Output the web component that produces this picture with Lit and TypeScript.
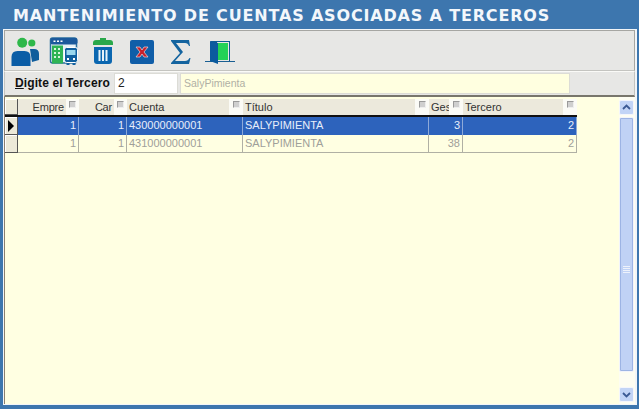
import { LitElement, html, css, svg } from "lit";
import { customElement } from "lit/decorators.js";

const COLS = [
  { label: "Empre", w: 61, right: true, box: 13 },
  { label: "Car", w: 48, right: true, box: 13 },
  { label: "Cuenta", w: 116, right: false, box: 14 },
  { label: "Título", w: 186, right: false, box: 14 },
  { label: "Ges", w: 34, right: false, box: 14 },
  { label: "Tercero", w: 114, right: false, box: 14 },
];
const ROWS = [
  ["1", "1", "430000000001", "SALYPIMIENTA", "3", "2"],
  ["1", "1", "431000000001", "SALYPIMIENTA", "38", "2"],
];

const icons = [
  svg`<svg width="30" height="30" viewBox="0 0 30 30"><circle cx="21.800" cy="6" r="3.600" fill="#2eb84a"/><path d="M20 12h4q5 0 5 5v6l-7 2z" fill="#0f5d9c"/><circle cx="12.200" cy="5.700" r="5" fill="#2eb84a"/><path d="M1.500 29V20q0-6 6-6h7q6 0 6 6v9z" fill="#0b5da6"/></svg>`,
  svg`<svg width="30" height="30" viewBox="0 0 30 30"><rect x="1.500" y="1" width="26" height="25" rx="2" fill="#e8f2f6" stroke="#2a6f9e" stroke-width="1.500"/><rect x="1.500" y="1" width="27" height="6.500" rx="2" fill="#1c5a9c"/><path d="M4.500 3.500h2V5h-2zM8 3.500h2V5H8zM11.500 3.500h2V5h-2z" fill="#fff"/><rect x="3" y="8.500" width="11" height="18" fill="#2fb455"/><path d="M5 11h2v2H5zM9 11h2v2H9zM5 15h2v2H5zM9 15h2v2H9zM5 19h2v2H5zM9 19h2v2H9z" fill="#d7f3dc"/><rect x="15.500" y="10.500" width="13" height="15" rx="2" fill="#11609f" stroke="#fff"/><rect x="17.500" y="13" width="9" height="5" fill="#9bd8ee"/><path d="M18 21h2v2h-2zM24 21h2v2h-2z" fill="#fff"/><path d="M17.500 26h3v2h-3zM23.500 26h3v2h-3z" fill="#11609f"/></svg>`,
  svg`<svg width="24" height="30" viewBox="0 0 24 30"><path d="M9 1h6v2H9z" fill="#2aa84a"/><path d="M2 6q0-3 3-3h14q3 0 3 3v2H2z" fill="#2aa84a"/><path d="M3 10h18v14q0 3-3 3H6q-3 0-3-3z" fill="#0b67b0"/><path d="M7.500 13h2v11h-2zM11 13h2v11h-2zM14.500 13h2v11h-2z" fill="#e8f3fa"/></svg>`,
  svg`<svg width="26" height="26" viewBox="0 0 26 26"><rect x="1" y="1" width="24" height="24" rx="2" fill="#105ea8"/><path d="M7 8h4l2 3 2-3h4l-4 5 4 5h-4l-2-3-2 3H7l4-5z" fill="#c8202c" stroke="#f0d8d8" stroke-width=".7"/></svg>`,
  svg`<svg width="22" height="26" viewBox="0 0 22 26"><path d="M1 1h18l1 6h-1q-1-3-4-3H6l7 9-8 9h10q3 0 4.500-3h1L19 25H1v-1l9-10L1 2z" fill="#14649f"/></svg>`,
  svg`<svg width="32" height="28" viewBox="0 0 32 28"><path d="M7 3h19v20h-1V4H13v20H7z" fill="#0e5c94"/><path d="M14 5h10v17H14z" fill="#23d257"/><path d="M6 3l8 2v21l-8-3z" fill="#0b5a9e"/><path d="M1 23.500h6M14 23.500h17" stroke="#1a5f92" stroke-width="1.200"/></svg>`,
];

@customElement("app-root")
export class AppRoot extends LitElement {
  static styles = css`
    :host {
      display: block;
      width: 639px;
      height: 409px;
      font-family: "Liberation Sans", Arial, sans-serif;
      overflow: hidden;
    }
    .frame {
      box-sizing: border-box;
      width: 639px;
      height: 409px;
      background: #3d76ae;
      padding: 0 2px 4px 3px;
      display: flex;
      flex-direction: column;
    }
    .title {
      height: 29px;
      flex: none;
      box-sizing: border-box;
      padding: 6px 0 0 10px;
      color: #f3f7fb;
      font: bold 16px/20px "DejaVu Sans", sans-serif;
      letter-spacing: 0.830px;
      white-space: nowrap;
    }
    .body {
      flex: 1;
      display: flex;
      flex-direction: column;
      background: #f2f5f8;
      min-height: 0;
      padding: 1px 2px 1px 1px;
    }
    .toolbar {
      height: 41px;
      flex: none;
      box-sizing: border-box;
      border: 1px solid #a6a6a2;
      border-bottom-color: #c4c4c0;
      background: #e7e7e5;
      display: flex;
      align-items: center;
      padding: 2px 0 0 0;
    }
    .tool {
      width: 39px;
      display: flex;
      justify-content: center;
      align-items: center;
    }
    .search {
      height: 26px;
      flex: none;
      box-sizing: border-box;
      display: flex;
      align-items: center;
      padding: 0 0 1px 10px;
      background: #e7e7e5;
      border: 1px solid #c4c4c0;
      border-top-color: #fafaf7;
      border-bottom: 2px solid #78766c;
    }
    .lbl {
      width: 99px;
      font-weight: bold;
      color: #111;
      white-space: nowrap;
      font-size: 12px;
      letter-spacing: 0.100px;
    }
    .lbl u { text-decoration: underline; }
    .in {
      box-sizing: border-box;
      height: 21px;
      line-height: 19px;
      padding: 0 3px;
      border: 1px solid #dcdcd6;
      font-size: 12px;
    }
    .code {
      width: 64px;
      background: #fff;
      color: #222;
      margin-right: 2px;
    }
    .name {
      width: 390px;
      background: #ffffe0;
      color: #b0b0a4;
      font-size: 10.500px;
    }
    .main {
      flex: 1;
      min-height: 0;
      display: flex;
      background: #ffffe2;
      border-left: 1px solid #8a7f70;
    }
    .grid {
      flex: 1;
      min-width: 0;
      font-size: 11px;
      color: #222;
      padding-top: 2px;
    }
    .row {
      display: flex;
      height: 18px;
      box-sizing: border-box;
      width: fit-content;
    }
    .ind {
      width: 13px;
      flex: none;
      box-sizing: border-box;
      background: #ece9d8;
      border: 1px solid #555;
      border-width: 0 1px 1px 0;
      box-shadow: inset 1px 1px 0 #fff;
      display: flex;
      align-items: center;
      justify-content: center;
    }
    .arrow {
      width: 0;
      height: 0;
      border-left: 6px solid #000;
      border-top: 6px solid transparent;
      border-bottom: 6px solid transparent;
    }
    .head {
      border-bottom: 2px solid #111;
    }
    .head .cell {
      background: #ece9dc;
      border: none;
      position: relative;
      color: #333;
      line-height: 17px;
    }
    .cell {
      box-sizing: border-box;
      flex: none;
      border-right: 1px solid #b0b0a4;
      border-bottom: 1px solid #b0b0a4;
      padding: 0 2px;
      line-height: 17px;
      white-space: nowrap;
      overflow: hidden;
    }
    .r { text-align: right; }
    .head .r { padding-right: 15px; letter-spacing: -0.200px; }
    .head .l { padding-left: 2px; }
    .box {
      position: absolute;
      right: 0;
      top: 0;
      height: 16px;
      background: #fbfbf6;
      display: flex;
      justify-content: center;
      padding-top: 2px;
      box-sizing: border-box;
    }
    .box i {
      width: 7px;
      height: 7px;
      background: #cfcfcf;
      border: 1px solid #9a9a9a;
      border-right-color: #eee;
      border-bottom-color: #eee;
      box-sizing: border-box;
    }
    .sel .cell {
      background: #2d63bc;
      color: #e8eefa;
      border-color: #8eaad8;
      border-bottom: none;
    }
    .plain .cell { color: #a0a09a; }
    .scroll {
      width: 16px;
      flex: none;
      display: flex;
      flex-direction: column;
      background: #fdfdf2;
      box-sizing: border-box;
      padding: 3px 0 2px 0;
    }
    .btn {
      height: 15px;
      flex: none;
      margin: 0 1px 0 0;
      box-sizing: border-box;
      border-radius: 2px;
      background: #c2d4f6;
      border: 1px solid #f4f6fc;
      display: flex;
      align-items: center;
      justify-content: center;
    }
    .thumb {
      flex: 1;
      margin: 2px 1px 15px 0;
      background: #c0d2f5;
      border: 1px solid #f2f4fb;
      outline: 1px solid #9db4e4;
      outline-offset: -2px;
      display: flex;
      align-items: center;
      justify-content: center;
      border-radius: 2px;
    }
    .grip {
      margin-top: 50px;
      display: flex;
    }
  `;

  render() {
    return html`
      <div class="frame">
        <div class="title">MANTENIMIENTO DE CUENTAS ASOCIADAS A TERCEROS</div>
        <div class="body">
          <div class="toolbar">
            ${icons.map((i) => html`<div class="tool">${i}</div>`)}
          </div>
          <div class="search">
            <div class="lbl"><u>D</u>igite el Tercero</div>
            <div class="in code">2</div>
            <div class="in name">SalyPimienta</div>
          </div>
          <div class="main">
            <div class="grid">
              <div class="row head">
                <div class="ind"></div>
                ${COLS.map(
                  (c) => html`<div class="cell ${c.right ? "r" : "l"}" style="width:${c.w}px">
                    ${c.label}
                    <span class="box" style="width:${c.box}px"><i></i></span>
                  </div>`
                )}
              </div>
              ${ROWS.map(
                (r, i) => html`<div class="row ${i === 0 ? "sel" : "plain"}">
                  <div class="ind">${i === 0 ? html`<span class="arrow"></span>` : ""}</div>
                  ${r.map(
                    (v, j) => html`<div class="cell ${COLS[j].right || j >= 4 ? "r" : ""}" style="width:${COLS[j].w}px">${v}</div>`
                  )}
                </div>`
              )}
            </div>
            <div class="scroll">
              <div class="btn">
                <svg width="9" height="7" viewBox="0 0 9 7"><path d="M1 5l3.500-3.500L8 5" fill="none" stroke="#3b5a94" stroke-width="1.800"/></svg>
              </div>
              <div class="thumb">
                <span class="grip"><svg width="7" height="7" viewBox="0 0 7 7"><path d="M0 .5h7M0 2.500h7M0 4.500h7M0 6.500h7" stroke="#eef2fb"/></svg></span>
              </div>
              <div class="btn">
                <svg width="9" height="7" viewBox="0 0 9 7"><path d="M1 2l3.500 3.500L8 2" fill="none" stroke="#3b5a94" stroke-width="1.800"/></svg>
              </div>
            </div>
          </div>
        </div>
      </div>
    `;
  }
}
